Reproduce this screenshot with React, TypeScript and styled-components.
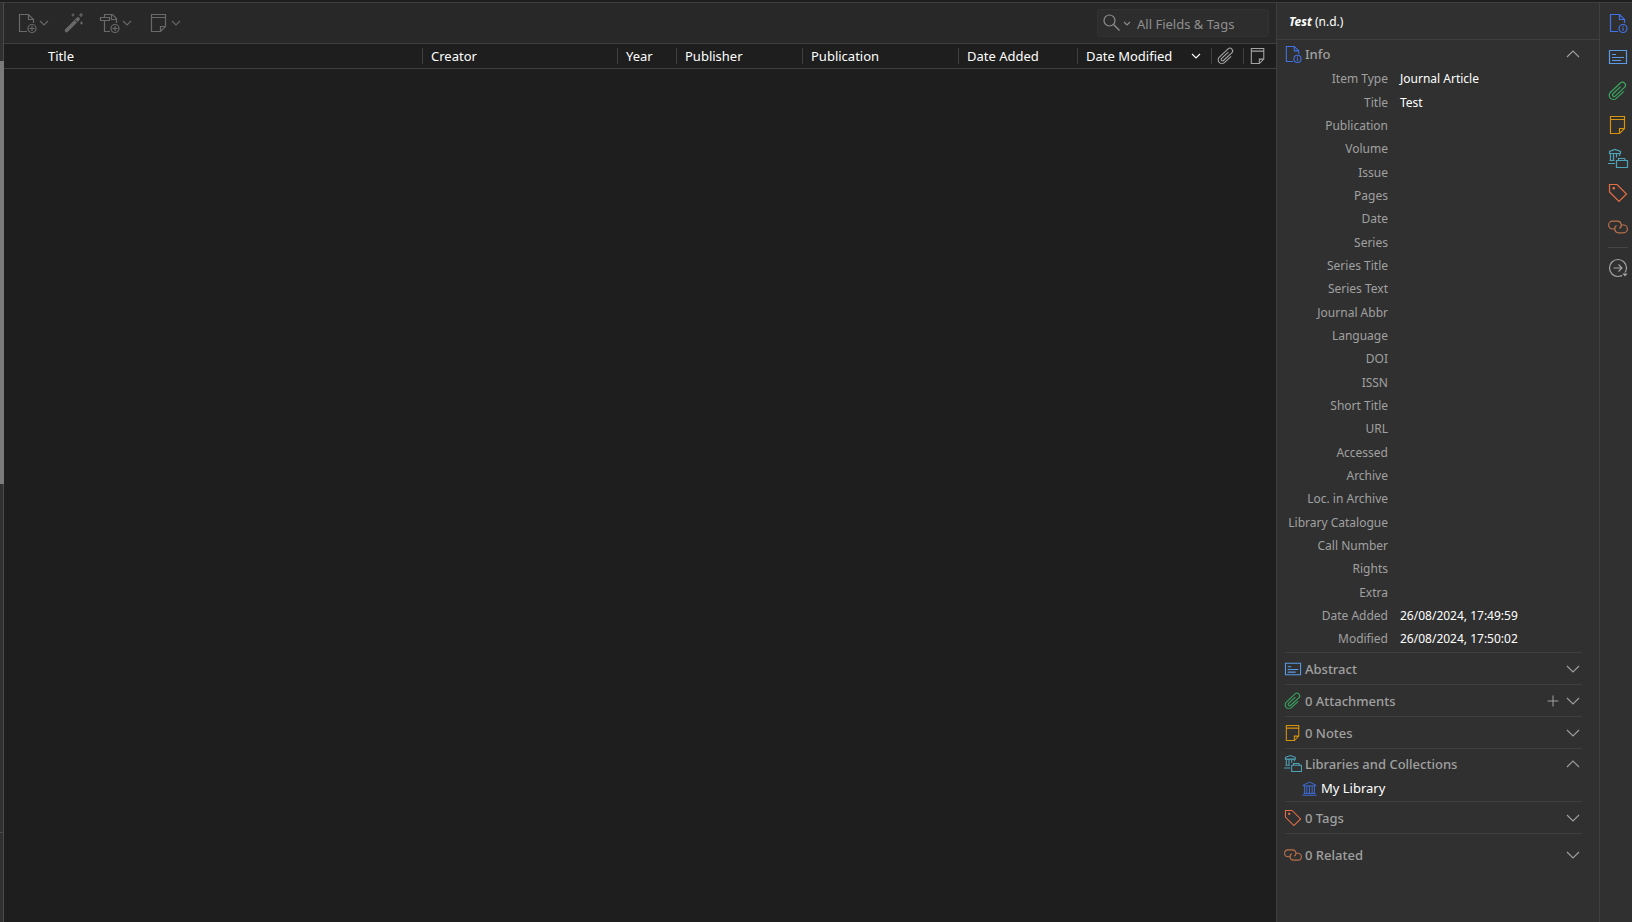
import React from "react";
import styled, { createGlobalStyle } from "styled-components";

const Global = createGlobalStyle`
  *, *::before, *::after { box-sizing: border-box; }
  body { margin: 0; background: #1e1e1e; color: #fff; font: 13px/16px "Noto Sans", "Open Sans", sans-serif; }
  button, input { font: inherit; color: inherit; }
  button { background: none; border: 0; padding: 0; cursor: pointer; }
  svg { display: block; flex: none; overflow: visible; }
`;

const line = "#3f3f3f";

const Window = styled.div`
  display: flex;
  min-height: 100vh;
  padding-top: 2px;
`;
const Sidebar = styled.aside`
  width: 4px;
  border-top: 1px solid ${line};
  border-right: 1px solid #4a4a4a;
  background: #303030;
  display: flex;
  flex-direction: column;
`;
const SidebarThumb = styled.div`
  width: 4px;
  height: 46%;
  margin-top: 58px;
  background: #7b7b7b;
`;
const SidebarRule = styled.div`
  margin-top: auto;
  margin-bottom: 89px;
  height: 1px;
  background: #4a4a4a;
`;
const Main = styled.main`
  flex: 1;
  min-width: 0;
  display: flex;
  flex-direction: column;
`;
const Toolbar = styled.div`
  display: flex;
  align-items: center;
  height: 42px;
  padding: 0 7px 0 13px;
  background: #282828;
  border: solid ${line};
  border-width: 1px 0;
`;
const ToolButton = styled.button<{ $gap: number }>`
  display: flex;
  align-items: center;
  gap: 3px;
  margin-right: ${(p) => p.$gap}px;
  color: #696969;
`;
const Search = styled.label`
  display: flex;
  align-items: center;
  gap: 2px;
  width: 172px;
  height: 28px;
  margin-left: auto;
  padding-left: 4px;
  border: 1px solid #333;
  border-radius: 4px;
  background: #2d2d2d;
  color: #8f8f8f;
`;
const SearchInput = styled.input`
  flex: 1;
  min-width: 0;
  height: 16px;
  margin: 2px 0 0 5px;
  padding: 0;
  border: 0;
  outline: 0;
  background: none;
  &::placeholder { color: #8f8f8f; opacity: 1; }
`;
const Items = styled.table`
  width: 100%;
  border-spacing: 0;
  table-layout: fixed;
`;
const Column = styled.th<{ $width?: number }>`
  width: ${(p) => (p.$width ? p.$width + "px" : "auto")};
  height: 25px;
  padding: 0;
  border-bottom: 1px solid ${line};
  font-weight: 400;
  text-align: left;
  white-space: nowrap;
`;
const ColumnLabel = styled.div<{ $first?: boolean }>`
  display: flex;
  align-items: center;
  justify-content: space-between;
  height: 16px;
  padding: 0 11px 0 ${(p) => (p.$first ? 44 : 8)}px;
  border-left: ${(p) => (p.$first ? 0 : 1)}px solid ${line};
`;
const IconLabel = styled(ColumnLabel)`
  padding: 0 0 0 6px;
  justify-content: flex-start;
  color: #a5a5a5;
`;
const Details = styled.section`
  width: 323px;
  background: #303030;
  border: solid ${line};
  border-width: 1px 0 0 1px;
`;
const DetailsTitle = styled.h1`
  height: 37px;
  margin: 0;
  padding: 11px 12px 9px;
  border-bottom: 1px solid ${line};
  font-size: 12px;
  line-height: 16px;
  font-weight: 400;
`;
const Section = styled.section<{ $bottom?: number }>`
  margin: 0 17px 0 8px;
  padding-bottom: ${(p) => p.$bottom || 0}px;
  border-bottom: 1px solid ${line};
  &:last-child { border-bottom: 0; padding-top: 5px; }
`;
const SectionHead = styled.div<{ $height: number }>`
  display: flex;
  align-items: center;
  height: ${(p) => p.$height}px;
  padding-right: 3px;
  color: #a0a0a0;
`;
const SectionTitle = styled.h2`
  flex: 1;
  margin: 0 0 0 4px;
  font-size: 13px;
  line-height: 16px;
  font-weight: 500;
`;
const ToggleButton = styled.button`
  margin-left: 8px;
  color: #a0a0a0;
`;
const Fields = styled.table`
  border-collapse: collapse;
`;
const FieldRow = styled.tr`
  height: 23px;
  &:nth-child(3n + 1) { height: 24px; }
`;
const FieldName = styled.th`
  width: 103px;
  padding: 0;
  color: #a0a0a0;
  font-weight: 400;
  font-size: 12px;
  text-align: right;
  white-space: nowrap;
`;
const FieldValue = styled.td`
  padding: 0 0 0 12px;
  font-size: 12px;
`;
const Library = styled.a`
  display: flex;
  align-items: center;
  gap: 4px;
  height: 18px;
  padding-left: 17px;
  color: #fff;
  text-decoration: none;
`;
const SideNav = styled.nav`
  display: flex;
  flex-direction: column;
  align-items: center;
  gap: 14px;
  width: 33px;
  padding: 10px 0 0 4px;
  border: solid ${line};
  border-width: 1px 0 0 1px;
  background: #303030;
`;
const NavButton = styled.button<{ $color: string }>`
  color: ${(p) => p.$color};
`;
const NavRule = styled.hr`
  width: 20px;
  height: 1px;
  margin: -4px 0;
  border: 0;
  background: #454545;
`;

const paths: Record<string, React.ReactNode> = {
  info: (<><path d="M10 18.5H2.5v-17h9l5 5V10M11.5 1.5v5h5" /><circle cx="15" cy="15.500" r="4" /><path d="M15 14.800v3M15 12.900v1" /></>),
  add: (<><path d="M10 18.500H2.500v-17h9l5 5V10M11.500 1.500v5h5" /><circle cx="15" cy="15.500" r="4" /><path d="M15 13v5M12.500 15.500h5" /></>),
  addFile: (<><path d="M10 18.500H4.500V8M4.500 4V1.500h8l4 4V10M11.500 1.500v5h5M.500 4.500h9v3h-9z" /><circle cx="15" cy="15.500" r="4" /><path d="M15 13v5M12.500 15.500h5" /></>),
  wand: (<><path d="M2.500 17.500 14 6" strokeWidth="3.600" strokeLinecap="round" /><path d="m11.300 7.300 1.600 1.600" stroke="#282828" /><path d="M9 .500v3M7.500 2h3M17 0v4M15 2h4M17.500 8.500v3M16 10h3" /></>),
  note: (<path d="M2.500 1.500h14v12l-5 5h-9zM2.500 4.500h14M16.500 13.500h-5v5" />),
  abstract: (<path d="M1.500 3.500h17v13h-17zM4 7.500h4M4 10.500h12M4 13.500h9" />),
  clip: (<path transform="translate(10 10) rotate(-43)" d="M4 4.200H-6.300a4.200 4.200 0 0 1 0-8.400H7.200a3 3 0 0 1 0 6H-5.500a1.600 1.600 0 0 1 0-3.200H5" />),
  libs: (<><path d="M1.500 4.500v-2L7 .500l5.500 2v2zM2.500 4.500v7M5.500 4.500v7M8.500 4.500v4M11.500 4.500V7M1.500 11.500h5M0 14.500h7" /><path d="M8.500 18.500v-7h2v-2h6l1 2h2v7zM10.500 11.500h7" /></>),
  library: (<path d="M1.500 5.500 10 1.500l8.500 4v1h-17zM3.500 6.500v10M6.500 6.500v10M10 6.500v10M13.500 6.500v10M16.500 6.500v10M2 16.500h16M.500 19h19" />),
  tag: (<><path d="M1.500 1.500h7.500l9.500 9.500-7.500 7.500L1.500 9z" /><path d="M5 4.500h1.500V6H5z" fill="currentColor" strokeWidth="1" /></>),
  link: (<path d="M7.500 12h-3a3.900 3.900 0 0 1 0-7.800h5a3.900 3.900 0 0 1 2 7.200M12.500 8h3a3.900 3.900 0 0 1 0 7.800h-5a3.900 3.900 0 0 1-2-7.200" />),
  locate: (<><circle cx="10" cy="10" r="8.500" /><path d="M5.500 10h8.500M10.500 6.500 14 10l-3.500 3.500" /><path d="M13 15h8l-4 4.500z" fill="currentColor" stroke="#303030" /></>),
  search: (<><circle cx="7.500" cy="7.500" r="5.500" /><path d="m11.500 11.500 6 6" /></>),
  plus: (<path d="M10 1v18M1 10h18" />),
};

type IconProps = { name: string; size?: number; color?: string; stroke?: number };
const Icon = ({ name, size = 20, color, stroke = 1.2 }: IconProps) => (
  <svg
    width={size}
    height={size}
    viewBox={size === 16 ? "1 1 18 18" : "0 0 20 20"}
    fill="none"
    stroke={color || "currentColor"}
    strokeWidth={stroke}
    aria-hidden="true"
  >
    {paths[name]}
  </svg>
);
const Chevron = ({ width = 8, up }: { width?: number; up?: boolean }) => {
  const half = width / 2;
  return (
    <svg width={width} height={half + 2} viewBox={`0 0 ${width} ${half + 2}`} fill="none" stroke="currentColor" strokeWidth="1.1" aria-hidden="true">
      <path d={up ? `M0 ${half + 1}L${half} 1L${width} ${half + 1}` : `M0 1L${half} ${half + 1}L${width} 1`} />
    </svg>
  );
};

const columns: [string, number | undefined][] = [
  ["Title", undefined], ["Creator", 195], ["Year", 59], ["Publisher", 126],
  ["Publication", 156], ["Date Added", 119], ["Date Modified", 134],
];
const fields: [string, string?][] = [
  ["Item Type", "Journal Article"], ["Title", "Test"], ["Publication"], ["Volume"], ["Issue"], ["Pages"], ["Date"],
  ["Series"], ["Series Title"], ["Series Text"], ["Journal Abbr"], ["Language"], ["DOI"], ["ISSN"], ["Short Title"],
  ["URL"], ["Accessed"], ["Archive"], ["Loc. in Archive"], ["Library Catalogue"], ["Call Number"], ["Rights"],
  ["Extra"], ["Date Added", "26/08/2024, 17:49:59"], ["Modified", "26/08/2024, 17:50:02"],
];
const nav: [string, string, string][] = [
  ["info", "#4072e5", "Info"], ["abstract", "#5a9ae6", "Abstract"], ["clip", "#39a75f", "Attachments"],
  ["note", "#d6930c", "Notes"], ["libs", "#4fa3b8", "Libraries and Collections"],
  ["tag", "#e56e45", "Tags"], ["link", "#b9704a", "Related"],
];

type HeadProps = { icon: string; color: string; title: string; open?: boolean; add?: boolean; height?: number };
const Head = ({ icon, color, title, open, add, height = 31 }: HeadProps) => (
  <SectionHead $height={height}>
    <Icon name={icon} size={16} color={color} />
    <SectionTitle>{title}</SectionTitle>
    {add && <ToggleButton aria-label="Add attachment"><Icon name="plus" size={12} stroke={1.7} /></ToggleButton>}
    <ToggleButton aria-label={"Toggle " + title} aria-expanded={!!open}><Chevron width={12} up={open} /></ToggleButton>
  </SectionHead>
);

export default function App() {
  return (
    <Window>
      <Global />
      <Sidebar><SidebarThumb /><SidebarRule /></Sidebar>
      <Main>
        <Toolbar>
          <ToolButton $gap={16} aria-label="New item"><Icon name="add" /><Chevron /></ToolButton>
          <ToolButton $gap={16} aria-label="Add by identifier"><Icon name="wand" /></ToolButton>
          <ToolButton $gap={18} aria-label="Add attachment"><Icon name="addFile" /><Chevron /></ToolButton>
          <ToolButton $gap={0} aria-label="New note"><Icon name="note" /><Chevron /></ToolButton>
          <Search>
            <Icon name="search" /><Chevron width={6} />
            <SearchInput type="text" placeholder="All Fields &amp; Tags" aria-label="All Fields &amp; Tags" />
          </Search>
        </Toolbar>
        <Items>
          <thead>
            <tr>
              {columns.map(([label, width], i) => (
                <Column key={label} $width={width} scope="col">
                  <ColumnLabel $first={i === 0}>{label}{i === 6 && <Chevron />}</ColumnLabel>
                </Column>
              ))}
              <Column $width={32} aria-label="Attachments"><IconLabel><Icon name="clip" size={16} /></IconLabel></Column>
              <Column $width={33} aria-label="Notes"><IconLabel><Icon name="note" size={16} /></IconLabel></Column>
            </tr>
          </thead>
        </Items>
      </Main>
      <Details>
        <DetailsTitle><b><i>Test</i></b> (n.d.)</DetailsTitle>
        <Section $bottom={1}>
          <Head icon="info" color="#4072e5" title="Info" open height={27} />
          <Fields>
            <tbody>
              {fields.map(([name, value]) => (
                <FieldRow key={name}><FieldName scope="row">{name}</FieldName><FieldValue>{value}</FieldValue></FieldRow>
              ))}
            </tbody>
          </Fields>
        </Section>
        <Section><Head icon="abstract" color="#5a9ae6" title="Abstract" /></Section>
        <Section><Head icon="clip" color="#39a75f" title="0 Attachments" add /></Section>
        <Section><Head icon="note" color="#d6930c" title="0 Notes" /></Section>
        <Section $bottom={4}>
          <Head icon="libs" color="#4fa3b8" title="Libraries and Collections" open height={30} />
          <Library href="#my-library"><Icon name="library" size={15} color="#4072e5" />My Library</Library>
        </Section>
        <Section><Head icon="tag" color="#e56e45" title="0 Tags" /></Section>
        <Section><Head icon="link" color="#b9704a" title="0 Related" /></Section>
      </Details>
      <SideNav>
        {nav.map(([icon, color, label]) => (
          <NavButton key={icon} $color={color} aria-label={label}><Icon name={icon} /></NavButton>
        ))}
        <NavRule />
        <NavButton $color="#a5a5a5" aria-label="Locate"><Icon name="locate" /></NavButton>
      </SideNav>
    </Window>
  );
}
